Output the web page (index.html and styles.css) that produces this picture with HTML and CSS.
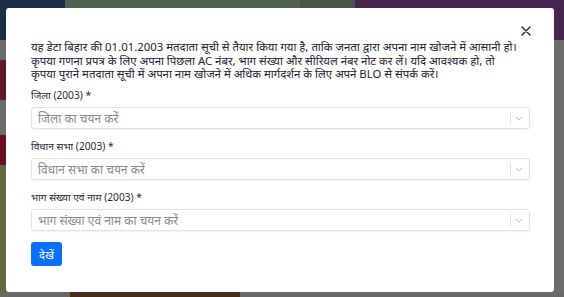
FILE: index.html
```html
<!DOCTYPE html>
<html lang="hi">
<head>
<meta charset="utf-8">
<title>मतदाता सूची खोज</title>
<link rel="stylesheet" href="styles.css">
</head>
<body>
<div class="page">
  <div class="topbar">
    <div class="tb-blue"></div>
    <div class="tb-green"></div>
    <div class="tb-grey"></div>
    <div class="tb-purple"></div>
  </div>
  <div class="page-body">
    <div class="side">
      <div class="s-grey1"></div>
      <div class="s-maroon"></div>
      <div class="s-grey2"></div>
      <div class="s-red"></div>
      <div class="s-olive"></div>
    </div>
    <div class="main"></div>
  </div>
  <div class="bottombar">
    <div class="bb-grey"></div>
    <div class="bb-brown"></div>
    <div class="bb-grey2"></div>
  </div>
</div>
<div class="backdrop"></div>
<div class="modal">
  <div class="modal-header">
    <button class="close" aria-label="बंद करें">
      <svg width="10" height="10" viewBox="0 0 10 10"><path d="M1 1L9 9M9 1L1 9" stroke="#222" stroke-width="1.4" stroke-linecap="round"/></svg>
    </button>
  </div>
  <p class="intro">यह डेटा बिहार की 01.01.2003 मतदाता सूची से तैयार किया गया है, ताकि जनता द्वारा अपना नाम खोजने में आसानी हो। कृपया गणना प्रपत्र के लिए अपना पिछला AC नंबर, भाग संख्या और सीरियल नंबर नोट कर लें। यदि आवश्यक हो, तो<br>कृपया पुराने मतदाता सूची में अपना नाम खोजने में अधिक मार्गदर्शन के लिए अपने BLO से संपर्क करें।</p>
  <div class="field">
    <label class="label">जिला (2003) *</label>
    <div class="select">
      <span class="placeholder">जिला का चयन करें</span>
      <span class="sep"></span>
      <svg class="chev" width="8" height="5" viewBox="0 0 8 5"><path d="M1 1L4 4L7 1" fill="none" stroke="#bbb" stroke-width="1"/></svg>
    </div>
  </div>
  <div class="field">
    <label class="label">विधान सभा (2003) *</label>
    <div class="select">
      <span class="placeholder">विधान सभा का चयन करें</span>
      <span class="sep"></span>
      <svg class="chev" width="8" height="5" viewBox="0 0 8 5"><path d="M1 1L4 4L7 1" fill="none" stroke="#bbb" stroke-width="1"/></svg>
    </div>
  </div>
  <div class="field">
    <label class="label">भाग संख्या एवं नाम (2003) *</label>
    <div class="select">
      <span class="placeholder">भाग संख्या एवं नाम का चयन करें</span>
      <span class="sep"></span>
      <svg class="chev" width="8" height="5" viewBox="0 0 8 5"><path d="M1 1L4 4L7 1" fill="none" stroke="#bbb" stroke-width="1"/></svg>
    </div>
  </div>
  <button class="btn">देखें</button>
</div>
</body>
</html>
```
FILE: styles.css
```css
* { box-sizing: border-box; }
html, body { margin: 0; padding: 0; height: 100%; }
body {
  font-family: "Noto Sans", "Noto Sans Devanagari", sans-serif;
  background: #d8d8d8;
  overflow: hidden;
}
.page { display: flex; flex-direction: column; height: 297px; }
.topbar { display: flex; height: 40px; }
.tb-blue { width: 65px; background: #3a5a8a; }
.tb-green { width: 235px; background: #9fc4a8; }
.tb-grey { width: 55px; background: #9aa59a; }
.tb-purple { flex: 1; background: #8a4aa0; }
.page-body { flex: 1; display: flex; }
.side { width: 20px; display: flex; flex-direction: column; }
.s-grey1 { height: 20px; background: #d8d8d8; }
.s-maroon { height: 40px; background: #c03050; }
.s-grey2 { height: 35px; background: #d8d8d8; }
.s-red { height: 30px; background: #d02040; }
.s-olive { flex: 1; background: #c8d080; }
.main { flex: 1; background: #d8d8d8; }
.bottombar { display: flex; height: 6px; }
.bb-grey { width: 70px; background: #d0d0d0; }
.bb-brown { width: 170px; background: #8a5a38; }
.bb-grey2 { flex: 1; background: #d0d0d0; }
.backdrop {
  position: fixed; inset: 0;
  background: rgba(0, 0, 0, 0.5);
}
.modal {
  position: fixed;
  left: 6px; top: 8px;
  width: 548px; height: 284px;
  background: #fff;
  border-radius: 3px;
  padding: 12px 24px 0 25px;
  color: #1f2235;
}
.modal-header { display: flex; justify-content: flex-end; height: 20px; margin-right: -4px; }
.close {
  border: 0; background: none; padding: 0;
  width: 16px; height: 16px;
  display: flex; align-items: center; justify-content: center;
  margin-top: 3px;
}
.intro {
  margin: 0 0 7px;
  font-size: 11.4px;
  line-height: 13.7px;
}
.field { display: flex; flex-direction: column; margin-bottom: 10px; }
.label {
  font-size: 10.2px;
  line-height: 14px;
  margin-bottom: 5px;
  color: #2a2a35;
}
.select {
  height: 22px;
  border: 1px solid #e2e2e2;
  border-radius: 3px;
  box-shadow: 0 1px 2px rgba(0,0,0,0.06);
  display: flex; align-items: center;
  padding: 0 6px 0 6px;
}
.placeholder { flex: 1; font-size: 12px; color: #8a8a8a; }
.sep { width: 1px; height: 12px; background: #e0e0e0; margin-right: 4px; }
.chev { display: block; }
.btn {
  margin-top: 1px;
  background: #0d6efd; color: #fff;
  border: 0; border-radius: 3px;
  width: 31px; height: 24px;
  font-family: inherit; font-size: 11px;
  padding: 0;
}
```
